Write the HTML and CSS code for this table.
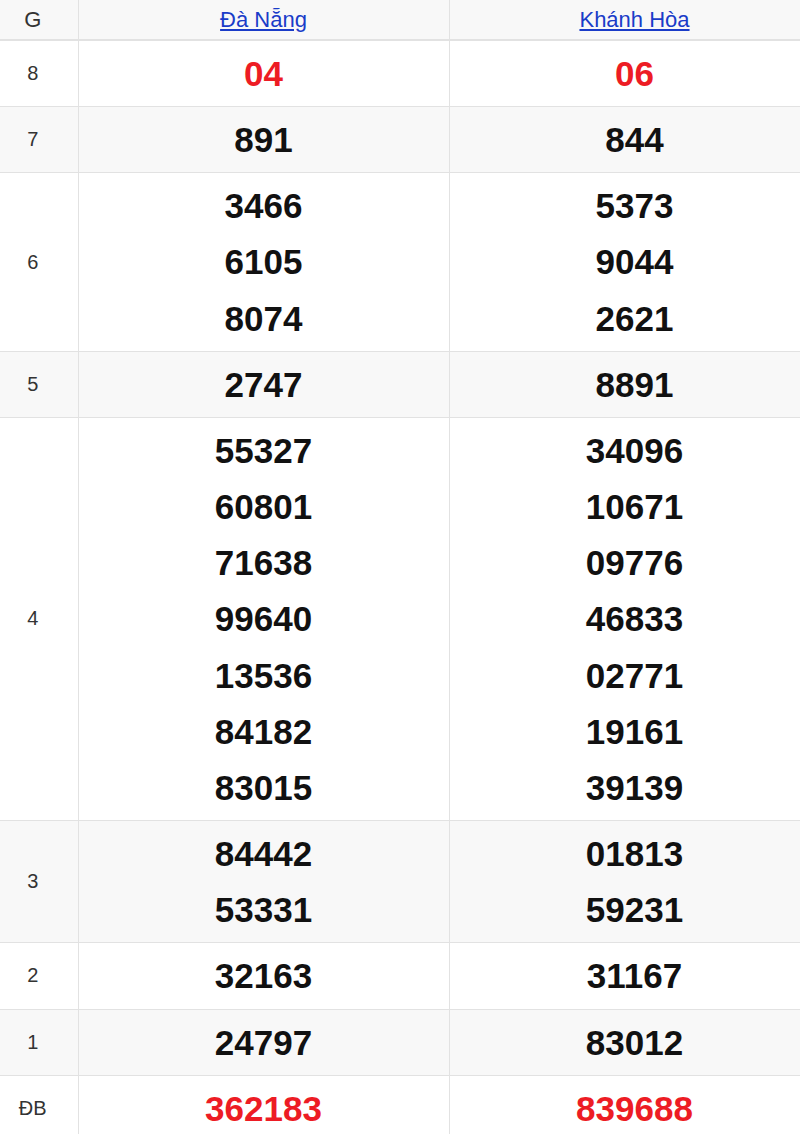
FILE: index.html
```html
<!DOCTYPE html>
<html lang="vi">
<head>
<meta charset="utf-8">
<link rel="stylesheet" href="styles.css">
</head>
<body>
<div class="wrap">
<table class="kq">
  <colgroup><col class="c-g"><col class="c-p"><col class="c-p"></colgroup>
  <thead>
    <tr><th class="lbl">G</th><th><a href="#">Đà Nẵng</a></th><th><a href="#">Khánh Hòa</a></th></tr>
  </thead>
  <tbody>
    <tr><td class="lbl">8</td><td class="num red">04</td><td class="num red">06</td></tr>
    <tr class="alt"><td class="lbl">7</td><td class="num">891</td><td class="num">844</td></tr>
    <tr><td class="lbl">6</td><td class="num"><div>3466</div><div>6105</div><div>8074</div></td><td class="num"><div>5373</div><div>9044</div><div>2621</div></td></tr>
    <tr class="alt"><td class="lbl">5</td><td class="num">2747</td><td class="num">8891</td></tr>
    <tr><td class="lbl">4</td><td class="num"><div>55327</div><div>60801</div><div>71638</div><div>99640</div><div>13536</div><div>84182</div><div>83015</div></td><td class="num"><div>34096</div><div>10671</div><div>09776</div><div>46833</div><div>02771</div><div>19161</div><div>39139</div></td></tr>
    <tr class="alt"><td class="lbl">3</td><td class="num"><div>84442</div><div>53331</div></td><td class="num"><div>01813</div><div>59231</div></td></tr>
    <tr><td class="lbl">2</td><td class="num">32163</td><td class="num">31167</td></tr>
    <tr class="alt"><td class="lbl">1</td><td class="num">24797</td><td class="num">83012</td></tr>
    <tr><td class="lbl">ĐB</td><td class="num red">362183</td><td class="num red">839688</td></tr>
  </tbody>
</table>
</div>
</body>
</html>
```
FILE: styles.css
```css
html, body { margin: 0; padding: 0; background: #fff; }
.wrap { width: 800px; overflow: hidden; }
.kq {
  width: 820px;
  border-collapse: collapse;
  table-layout: fixed;
  font-family: "Liberation Sans", Arial, sans-serif;
}
.c-g { width: 78px; }
.c-p { width: 371px; }
.kq th, .kq td {
  border: 1px solid #e2e2e2;
  text-align: center;
  vertical-align: middle;
  padding: 0;
}
.kq tr > :first-child { border-left: none; }
.kq thead tr th { border-top: none; }
.kq thead th {
  height: 39px;
  background: #f8f8f8;
  font-weight: normal;
  font-size: 22px;
  color: #333;
  border-bottom: 2px solid #e2e2e2;
}
.kq thead a { color: #1a3cc8; text-decoration: underline; }
.lbl {
  font-size: 20px;
  color: #333;
  padding-right: 12px !important;
}
.num {
  font-weight: bold;
  font-size: 35px;
  line-height: 56.15px;
  color: #111;
  padding: 5px 0 4px !important;
}
.num.red { color: #ed1c24; }
.alt td { background: #f8f8f8; }
```
